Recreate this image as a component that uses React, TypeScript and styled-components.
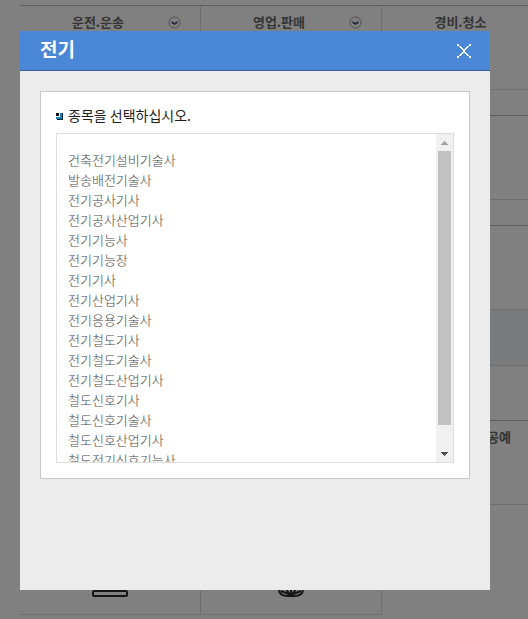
import React, { useRef, useState } from "react";
import styled, { createGlobalStyle } from "styled-components";

const GlobalStyle = createGlobalStyle`
  * { box-sizing: border-box; }
  body {
    margin: 0;
    background: #808080;
    font-family: "Noto Sans CJK KR", "Noto Sans", sans-serif;
  }
  button { padding: 0; border: 0; background: none; font: inherit; color: inherit; }
`;

const Screen = styled.div`
  position: relative;
  overflow: hidden;
  min-height: 100vh;
`;

const Catalog = styled.main`
  padding: 5px 0 4px 20px;
`;

const Group = styled.section`
  border-top: 1px solid #5d5d5d;
`;

const Columns = styled.div<{ $ruled?: boolean; $tall?: boolean }>`
  display: grid;
  grid-template-columns: repeat(3, 181px);
  height: ${(p) => (p.$tall ? 110 : 84)}px;
  border-bottom: ${(p) => (p.$ruled ? "1px solid #6e6e6e" : "0")};
`;

const Spacer = styled.div<{ $size: number; $tinted?: boolean }>`
  height: ${(p) => p.$size}px;
  background: ${(p) => (p.$tinted ? "#797b7d" : "transparent")};
  border-bottom: ${(p) => (p.$tinted ? "1px solid #6e6e6e" : "0")};
`;

const Category = styled.div<{ $divided?: boolean; $end?: boolean }>`
  display: flex;
  align-items: flex-start;
  justify-content: ${(p) => (p.$end ? "flex-end" : "flex-start")};
  padding: ${(p) => (p.$end ? "6px 52px 0 0" : "6px 19px 0 8px")};
  border-right: ${(p) => (p.$divided ? "1px solid #6e6e6e" : "0")};
`;

const CategoryName = styled.h2<{ $fill?: boolean }>`
  flex: ${(p) => (p.$fill ? "1" : "none")};
  margin: 0;
  color: #343434;
  font-size: 13px;
  font-weight: 700;
  line-height: 20px;
  text-align: center;
`;

const Expand = styled.button`
  display: flex;
  width: 13px;
  height: 20px;
  align-items: center;
`;

const ExpandSpace = styled.span`
  width: 13px;
`;

const IconCell = styled.div`
  display: flex;
  align-items: flex-end;
  justify-content: center;
  padding-bottom: 17px;
  border: solid #6e6e6e;
  border-width: 0 1px 1px 0;
`;

const Dialog = styled.div`
  position: absolute;
  inset: 31px 38px 29px 20px;
  background: #ececec;
`;

const DialogHeader = styled.header`
  display: flex;
  align-items: center;
  justify-content: space-between;
  height: 40px;
  padding: 0 18px 0 20px;
  background: #4a87d7;
  border-bottom: 1px solid #365f9b;
`;

const DialogTitle = styled.h1`
  margin: 0;
  padding-bottom: 4px;
  color: #fff;
  font-size: 19px;
  font-weight: 700;
  line-height: 28px;
`;

const Close = styled.button`
  display: flex;
  width: 16px;
  height: 16px;
  align-items: center;
  justify-content: center;
`;

const Panel = styled.section`
  margin: 20px;
  padding: 12px 15px 15px;
  background: #fff;
  border: 1px solid #c8c8c8;
`;

const PanelTitle = styled.h3`
  display: flex;
  align-items: center;
  gap: 5px;
  margin: 0 0 7px;
  color: #1c1c1c;
  font-size: 14px;
  font-weight: 400;
  line-height: 22px;
`;

const ListFrame = styled.div`
  display: flex;
  height: 330px;
  border: 1px solid #dedede;
`;

const List = styled.ul`
  flex: 1;
  margin: 0;
  padding: 16px 11px;
  overflow-y: auto;
  list-style: none;
  scrollbar-width: none;
`;

const Item = styled.li`
  height: 20px;
`;

const ItemLink = styled.a`
  color: #484848;
  font-size: 13px;
  font-weight: 300;
  line-height: 20px;
  display: block;
  text-decoration: none;
`;

const ScrollBar = styled.div`
  display: flex;
  flex-direction: column;
  width: 17px;
  background: #f0f0f0;
`;

const ScrollButton = styled.button`
  display: flex;
  height: 17px;
  align-items: center;
  justify-content: center;
`;

const Track = styled.div`
  flex: 1;
  padding: 0 2px;
`;

const Thumb = styled.div`
  height: 274px;
  background: #c1c1c1;
`;

const ExpandIcon = () => (
  <svg width="13" height="13" viewBox="0 0 13 13" fill="none" aria-hidden="true">
    <circle cx="6.5" cy="6.5" r="5.5" stroke="#515151" />
    <path d="M3.5 5l3 2 3-2v2l-3 2-3-2z" fill="#15243c" />
  </svg>
);

const Bullet = () => (
  <svg width="7" height="9" viewBox="0 0 7 9" shapeRendering="crispEdges" aria-hidden="true">
    <path d="M4 2h3v7H1V8H0V6h4z" fill="#0c2438" />
    <path d="M4 2h2v6H0V6h4z" fill="#1b82b8" />
    <path d="M0 2h3v3H0z" fill="#111" />
  </svg>
);

const CloseIcon = () => (
  <svg width="14" height="14" viewBox="0 0 14 14" shapeRendering="crispEdges" aria-hidden="true">
    <path
      d="M0 0h2v2H0zM2 2h2v1H2zM3 3h2v1H3zM4 4h2v1H4zM5 5h2v1H5zM6 6h2v2H6zM7 5h2v1H7zM8 4h2v1H8zM9 3h2v1H9zM10 2h2v1h-2zM12 0h2v2h-2zM5 8h2v1H5zM4 9h2v1H4zM3 10h2v1H3zM2 11h2v1H2zM0 12h2v2H0zM7 8h2v1H7zM8 9h2v1H8zM9 10h2v1H9zM10 11h2v1h-2zM12 12h2v2h-2z"
      fill="#fff"
    />
  </svg>
);

const LaptopIcon = () => (
  <svg width="38" height="34" viewBox="0 0 38 34" fill="none" stroke="#151515" strokeWidth="2" aria-hidden="true">
    <rect x="5" y="4" width="28" height="22" rx="2" />
    <rect x="2" y="28" width="34" height="5" rx="1" />
  </svg>
);

const GlobeIcon = () => (
  <svg width="28" height="34" viewBox="0 0 28 34" fill="none" stroke="#151515" strokeWidth="2" aria-hidden="true">
    <path d="M2 26c0 5 4 7 9 7h6c5 0 9-2 9-7V14H2z" />
    <path d="M14 14v18M4 28l10 4 10-4M8 20c0 6 2 9 6 12 4-3 6-6 6-12" />
  </svg>
);

const Triangle = ({ down }: { down?: boolean }) => (
  <svg width="7" height="4" viewBox="0 0 7 4" shapeRendering="crispEdges" aria-hidden="true">
    {down ? (
      <path d="M0 0h7v1H0zM1 1h5v1H1zM2 2h3v1H2zM3 3h1v1H3z" fill="#505050" />
    ) : (
      <path d="M3 0h1v1H3zM2 1h3v1H2zM1 2h5v1H1zM0 3h7v1H0z" fill="#a3a3a3" />
    )}
  </svg>
);

const CATEGORIES = ["운전.운송", "영업.판매", "경비.청소"];

const ITEMS = [
  "건축전기설비기술사",
  "발송배전기술사",
  "전기공사기사",
  "전기공사산업기사",
  "전기기능사",
  "전기기능장",
  "전기기사",
  "전기산업기사",
  "전기응용기술사",
  "전기철도기사",
  "전기철도기술사",
  "전기철도산업기사",
  "철도신호기사",
  "철도신호기술사",
  "철도신호산업기사",
  "철도전기신호기능사",
];

export default function App() {
  const list = useRef<HTMLUListElement>(null);
  const [offset, setOffset] = useState(0);

  const onScroll = () => {
    const el = list.current;
    if (!el) return;
    const range = el.scrollHeight - el.clientHeight;
    setOffset(range > 0 ? (el.scrollTop / range) * 20 : 0);
  };

  const scrollBy = (top: number) => list.current?.scrollBy({ top });

  return (
    <Screen>
      <GlobalStyle />
      <Catalog>
        <Group>
          <Columns $ruled>
            {CATEGORIES.map((name, i) => (
              <Category key={name} $divided={i < 2}>
                <CategoryName $fill>{name}</CategoryName>
                {i < 2 ? (
                  <Expand aria-label={name}>
                    <ExpandIcon />
                  </Expand>
                ) : (
                  <ExpandSpace />
                )}
              </Category>
            ))}
          </Columns>
          <Spacer $size={25} />
        </Group>
        <Group>
          <Columns $ruled />
          <Spacer $size={25} />
        </Group>
        <Group>
          <Columns $ruled />
          <Spacer $size={56} $tinted />
          <Spacer $size={54} />
        </Group>
        <Group>
          <Columns $ruled>
            <Category />
            <Category />
            <Category $end>
              <CategoryName>공예</CategoryName>
            </Category>
          </Columns>
          <Columns $tall>
            <IconCell>
              <LaptopIcon />
            </IconCell>
            <IconCell>
              <GlobeIcon />
            </IconCell>
          </Columns>
        </Group>
      </Catalog>

      <Dialog role="dialog" aria-labelledby="dialog-title">
        <DialogHeader>
          <DialogTitle id="dialog-title">전기</DialogTitle>
          <Close aria-label="닫기">
            <CloseIcon />
          </Close>
        </DialogHeader>
        <Panel>
          <PanelTitle>
            <Bullet />
            종목을 선택하십시오.
          </PanelTitle>
          <ListFrame>
            <List ref={list} onScroll={onScroll}>
              {ITEMS.map((name) => (
                <Item key={name}>
                  <ItemLink href="#">{name}</ItemLink>
                </Item>
              ))}
            </List>
            <ScrollBar>
              <ScrollButton aria-label="위로" onClick={() => scrollBy(-20)}>
                <Triangle />
              </ScrollButton>
              <Track>
                <Thumb style={{ transform: `translateY(${offset}px)` }} />
              </Track>
              <ScrollButton aria-label="아래로" onClick={() => scrollBy(20)}>
                <Triangle down />
              </ScrollButton>
            </ScrollBar>
          </ListFrame>
        </Panel>
      </Dialog>
    </Screen>
  );
}
